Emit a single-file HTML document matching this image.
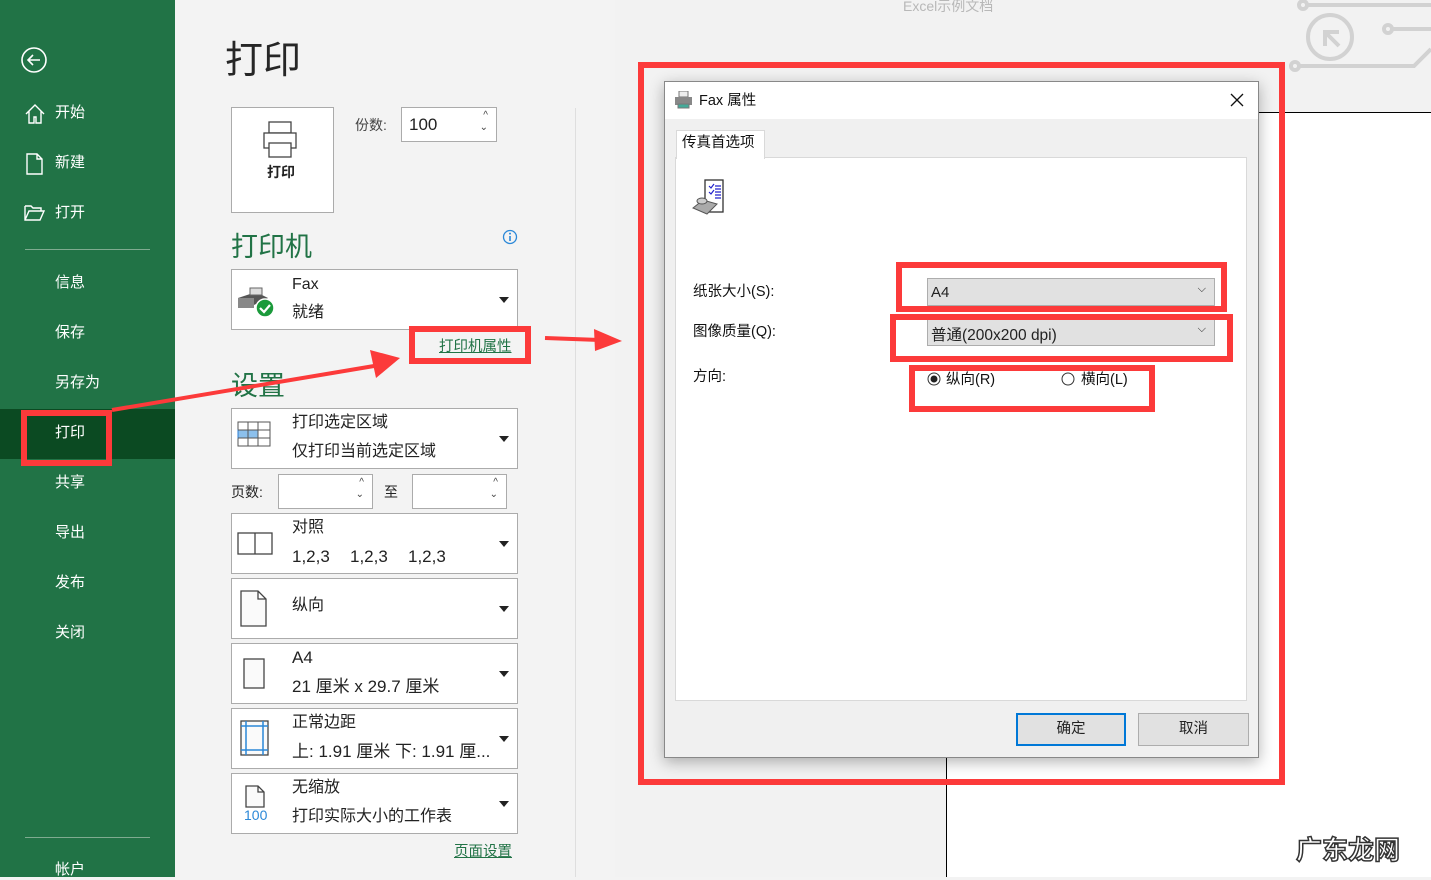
<!DOCTYPE html>
<html><head><meta charset="utf-8"><style>
*{margin:0;padding:0;box-sizing:border-box}
body{width:1431px;height:877px;overflow:hidden;background:#f3f3f3;font-family:"Liberation Sans","Noto Sans CJK SC",sans-serif;position:relative;color:#222}
.a{position:absolute}
.side{left:0;top:0;width:175px;height:877px;background:#217346}
.nav{position:absolute;left:55px;color:#fff;font-size:15px;line-height:20px}
.box{position:absolute;left:231px;width:287px;background:#fff;border:1px solid #ababab}
.box .t1{position:absolute;left:60px;top:4px;font-size:16px;line-height:20px}
.box .t2{position:absolute;left:60px;top:33px;font-size:16px;line-height:20px}
.dd{position:absolute;right:8px;width:0;height:0;border-left:5px solid transparent;border-right:5px solid transparent;border-top:6px solid #222}
.spin{position:absolute;background:#fff;border:1px solid #ababab}
.spin i{position:absolute;right:8px;font-style:normal;font-size:10px;color:#444}
.rb{position:absolute;border:6px solid #fc3a3a}
.dl{font-size:14.5px;color:#111;line-height:18px}
</style></head><body>
<div class="a side"></div>
<svg class="a" style="left:20px;top:46px" width="30" height="30"><circle cx="14" cy="14" r="12" fill="none" stroke="#fff" stroke-width="1.6"/><path d="M8 14h12M13 9l-5 5 5 5" fill="none" stroke="#fff" stroke-width="1.6"/></svg>
<svg class="a" style="left:24px;top:103px" width="22" height="22"><path d="M2 11L11 2l9 9M5 8v12h5v-6h2v6h5V8" fill="none" stroke="#fff" stroke-width="1.4"/></svg>
<svg class="a" style="left:26px;top:153px" width="18" height="22"><path d="M1 1h10l5 5v15H1z M11 1v5h5" fill="none" stroke="#fff" stroke-width="1.4"/></svg>
<svg class="a" style="left:24px;top:205px" width="22" height="16"><path d="M1 1h6l2 2h8v3 M1 1v14h15l4-9H5L1 15" fill="none" stroke="#fff" stroke-width="1.4"/></svg>
<div class="nav" style="top:103px">开始</div>
<div class="nav" style="top:153px">新建</div>
<div class="nav" style="top:203px">打开</div>
<div class="a" style="left:25px;top:249px;width:125px;height:1px;background:#7fab90"></div>
<div class="nav" style="top:273px">信息</div>
<div class="nav" style="top:323px">保存</div>
<div class="nav" style="top:373px">另存为</div>
<div class="a" style="left:0;top:409px;width:175px;height:50px;background:#0b4a22"></div>
<div class="nav" style="top:423px">打印</div>
<div class="rb" style="left:21px;top:410px;width:91px;height:56px"></div>
<div class="nav" style="top:473px">共享</div>
<div class="nav" style="top:523px">导出</div>
<div class="nav" style="top:573px">发布</div>
<div class="nav" style="top:623px">关闭</div>
<div class="a" style="left:25px;top:837px;width:125px;height:1px;background:#7fab90"></div>
<div class="nav" style="top:860px">帐户</div>

<div class="a" style="left:225px;top:36px;font-size:38px;color:#262626;line-height:50px">打印</div>
<div class="a" style="left:231px;top:107px;width:103px;height:106px;background:#fff;border:1px solid #ababab"></div>
<svg class="a" style="left:262px;top:120px" width="40" height="40"><rect x="7" y="2" width="22" height="11" fill="#fff" stroke="#444" stroke-width="1.3"/><rect x="2" y="13" width="32" height="15" fill="#fff" stroke="#444" stroke-width="1.3"/><rect x="7" y="23" width="22" height="14" fill="#fff" stroke="#444" stroke-width="1.3"/></svg>
<div class="a" style="left:267px;top:162px;font-size:14px;font-weight:bold">打印</div>
<div class="a" style="left:355px;top:115px;font-size:14px;color:#444">份数:</div>
<div class="spin" style="left:401px;top:107px;width:96px;height:35px"><span class="a" style="left:7px;top:7px;font-size:17px">100</span><i style="top:2px">^</i><i style="top:14px">⌄</i></div>
<div class="a" style="left:231px;top:229px;font-size:27px;color:#217346;line-height:36px">打印机</div>
<svg class="a" style="left:502px;top:229px" width="16" height="16"><circle cx="8" cy="8" r="6.5" fill="none" stroke="#2b88d8" stroke-width="1.3"/><path d="M8 7v5" stroke="#2b88d8" stroke-width="1.6"/><circle cx="8" cy="4.6" r="1" fill="#2b88d8"/></svg>
<div class="box" style="top:269px;height:61px"><div class="t1" style="top:5px">Fax</div><div class="t2" style="top:33px">就绪</div><div class="dd" style="top:27px"></div>
<svg class="a" style="left:4px;top:14px" width="40" height="36"><path d="M2 14l18-6 12 6-16 8z" fill="#555"/><rect x="2" y="14" width="16" height="10" fill="#888"/><rect x="14" y="4" width="12" height="7" fill="#ddd" stroke="#666"/><circle cx="29" cy="24" r="9" fill="#1b9a3b" stroke="#fff" stroke-width="1.5"/><path d="M24 24l4 4 6-7" fill="none" stroke="#fff" stroke-width="2.2"/></svg></div>
<div class="a" style="left:439px;top:335px;font-size:14.5px;color:#217346;text-decoration:underline">打印机属性</div>
<div class="rb" style="left:409px;top:326px;width:122px;height:38px"></div>
<div class="a" style="left:231px;top:368px;font-size:27px;color:#217346;line-height:36px">设置</div>
<div class="box" style="top:408px;height:61px"><div class="t1">打印选定区域</div><div class="t2">仅打印当前选定区域</div><div class="dd" style="top:27px"></div>
<svg class="a" style="left:5px;top:12px" width="36" height="36"><rect x="1" y="1" width="32" height="24" fill="#fff" stroke="#555"/><rect x="1" y="9" width="20" height="8" fill="#8cc0ec" stroke="#2b7cd3"/><path d="M11 1v24M21 1v24M1 9h32M1 17h32" stroke="#555" fill="none"/></svg></div>
<div class="a" style="left:231px;top:482px;font-size:14px">页数:</div>
<div class="spin" style="left:278px;top:474px;width:95px;height:35px"><i style="top:2px">^</i><i style="top:14px">⌄</i></div>
<div class="a" style="left:384px;top:482px;font-size:14px">至</div>
<div class="spin" style="left:412px;top:474px;width:95px;height:35px"><i style="top:2px">^</i><i style="top:14px">⌄</i></div>
<div class="box" style="top:513px;height:61px"><div class="t1">对照</div><div class="t2" style="font-size:17px">1,2,3</div><div class="t2" style="left:118px;font-size:17px">1,2,3</div><div class="t2" style="left:176px;font-size:17px">1,2,3</div><div class="dd" style="top:27px"></div>
<svg class="a" style="left:5px;top:18px" width="38" height="26"><rect x="1" y="1" width="34" height="21" fill="#fff" stroke="#444" stroke-width="1.3"/><path d="M18 1v21" stroke="#444" stroke-width="1.3"/></svg></div>
<div class="box" style="top:578px;height:61px"><div class="t1" style="top:17px">纵向</div><div class="dd" style="top:27px"></div>
<svg class="a" style="left:8px;top:11px" width="30" height="38"><path d="M1 1h17l8 8v27H1z M18 1v8h8" fill="#fafafa" stroke="#444" stroke-width="1.3"/></svg></div>
<div class="box" style="top:643px;height:61px"><div class="t1" style="font-size:17px">A4</div><div class="t2" style="font-size:17px">21 厘米 x 29.7 厘米</div><div class="dd" style="top:27px"></div>
<svg class="a" style="left:11px;top:14px" width="24" height="32"><rect x="1" y="1" width="20" height="29" fill="#fafafa" stroke="#444" stroke-width="1.3"/></svg></div>
<div class="box" style="top:708px;height:61px"><div class="t1">正常边距</div><div class="t2" style="font-size:17px">上: 1.91 厘米 下: 1.91 厘...</div><div class="dd" style="top:27px"></div>
<svg class="a" style="left:8px;top:11px" width="30" height="38"><rect x="1" y="1" width="27" height="34" fill="#fafafa" stroke="#444" stroke-width="1.3"/><path d="M1 6h27M1 30h27M6 1v34M23 1v34" stroke="#2b88d8" stroke-width="1.5"/></svg></div>
<div class="box" style="top:773px;height:61px"><div class="t1">无缩放</div><div class="t2">打印实际大小的工作表</div><div class="dd" style="top:27px"></div>
<svg class="a" style="left:13px;top:11px" width="22" height="24"><path d="M1 1h12l6 6v15H1z M13 1v6h6" fill="#fafafa" stroke="#444" stroke-width="1.3"/></svg>
<div class="a" style="left:12px;top:33px;font-size:14px;color:#2b88d8">100</div></div>
<div class="a" style="left:454px;top:840px;font-size:14.5px;color:#217346;text-decoration:underline">页面设置</div>
<div class="a" style="left:575px;top:108px;width:1px;height:769px;background:#dedede"></div>
<div class="a" style="left:615px;top:0;width:816px;height:877px;background:#f2f2f2"></div>

<div class="a" style="left:903px;top:-4px;font-size:14px;color:#b8b8b8">Excel示例文档</div>
<svg class="a" style="left:1285px;top:0" width="146" height="75"><g fill="none" stroke="#d2d2d2" stroke-width="4"><circle cx="45" cy="37" r="22"/><circle cx="18" cy="5" r="4"/><path d="M22 5h124"/><circle cx="103" cy="29" r="4"/><path d="M107 29h39"/><circle cx="10" cy="66" r="4"/><path d="M14 66h115l17-17"/><path d="M40 46V32h14M40 32l14 14"/></g></svg>
<div class="a" style="left:946px;top:112px;width:485px;height:765px;background:#fff;border-left:1px solid #000;border-top:1px solid #000"></div>

<div class="rb" style="left:638px;top:62px;width:647px;height:723px"></div>
<div class="a" style="left:664px;top:81px;width:595px;height:677px;background:#f0f0f0;border:1px solid #888;box-shadow:0 4px 14px rgba(0,0,0,.3)">
<div class="a" style="left:0;top:0;width:593px;height:37px;background:#fff"></div>
<svg class="a" style="left:9px;top:9px" width="20" height="18"><rect x="5" y="0" width="9" height="6" fill="#eee" stroke="#777"/><rect x="1" y="6" width="17" height="8" fill="#888"/><rect x="4" y="13" width="11" height="4" fill="#4a9" stroke="#777"/></svg>
<div class="a dl" style="left:34px;top:10px">Fax 属性</div>
<svg class="a" style="left:565px;top:11px" width="14" height="14"><path d="M1 1l12 12M13 1L1 13" stroke="#111" stroke-width="1.3"/></svg>
<div class="a" style="left:10px;top:75px;width:572px;height:544px;background:#fff;border:1px solid #d9d9d9"></div>
<div class="a" style="left:11px;top:48px;width:89px;height:29px;background:#fff;border:1px solid #d9d9d9;border-bottom:none"></div>
<div class="a dl" style="left:17px;top:52px">传真首选项</div>
<svg class="a" style="left:26px;top:96px" width="44" height="42"><rect x="14" y="2" width="18" height="32" fill="#fff" stroke="#333" stroke-width="1.3"/><path d="M18 8l2 2 3-4M18 14l2 2 3-4M24 8h6M24 11h6M24 14h6M24 17h6M24 20h6" stroke="#22c" stroke-width="1.2" fill="none"/><path d="M2 30l10-8 14 4-10 10z" fill="#aaa" stroke="#555"/><ellipse cx="11" cy="23" rx="5" ry="3" fill="#ccc" stroke="#555"/></svg>
<div class="a dl" style="left:28px;top:201px">纸张大小(S):</div>
<div class="a" style="left:262px;top:196px;width:288px;height:28px;background:#e1e1e1;border:1px solid #adadad"><span class="a" style="left:3px;top:5px;font-size:15px">A4</span><span class="a" style="right:8px;top:4px;font-size:11px">⌵</span></div>
<div class="a dl" style="left:28px;top:241px">图像质量(Q):</div>
<div class="a" style="left:262px;top:236px;width:288px;height:28px;background:#e1e1e1;border:1px solid #adadad"><span class="a" style="left:3px;top:4px;font-size:15.5px">普通(200x200 dpi)</span><span class="a" style="right:8px;top:4px;font-size:11px">⌵</span></div>
<div class="a dl" style="left:28px;top:286px">方向:</div>
<svg class="a" style="left:262px;top:290px" width="16" height="16"><circle cx="7" cy="7" r="6" fill="#fff" stroke="#333"/><circle cx="7" cy="7" r="3.5" fill="#222"/></svg>
<div class="a dl" style="left:281px;top:289px">纵向(R)</div>
<svg class="a" style="left:396px;top:290px" width="16" height="16"><circle cx="7" cy="7" r="6" fill="#fff" stroke="#333"/></svg>
<div class="a dl" style="left:416px;top:289px">横向(L)</div>
<div class="a" style="left:351px;top:631px;width:110px;height:33px;background:#e1e1e1;border:2px solid #0078d7;text-align:center;line-height:29px;font-size:14.5px">确定</div>
<div class="a" style="left:473px;top:631px;width:111px;height:33px;background:#e1e1e1;border:1px solid #adadad;text-align:center;line-height:31px;font-size:14.5px">取消</div>
</div>
<div class="rb" style="left:896px;top:262px;width:331px;height:50px"></div>
<div class="rb" style="left:890px;top:314px;width:343px;height:48px"></div>
<div class="rb" style="left:909px;top:365px;width:246px;height:47px"></div>

<svg class="a" style="left:0;top:0" width="640" height="480"><path d="M112 410L380 365" stroke="#fc3a3a" stroke-width="4"/><path d="M400 358L370 350 376 378z" fill="#fc3a3a"/><path d="M545 338L600 340" stroke="#fc3a3a" stroke-width="4"/><path d="M622 341L594 329 595 351z" fill="#fc3a3a"/></svg>
<div class="a" style="left:1296px;top:830px;font-size:26px;font-weight:bold;color:#fff;-webkit-text-stroke:1.5px #333">广东龙网</div>
</body></html>
